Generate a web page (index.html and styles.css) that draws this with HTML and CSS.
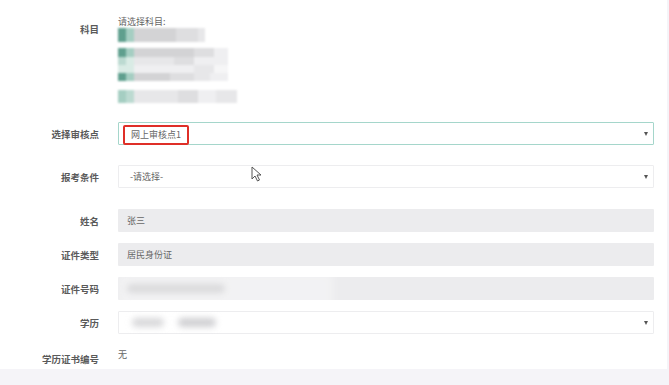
FILE: index.html
```html
<!DOCTYPE html>
<html lang="zh">
  <head>
    <meta charset="UTF-8" />
    <meta name="viewport" content="width=device-width, initial-scale=1.0" />
    <title>报名信息</title>
    <link rel="stylesheet" href="styles.css">
  </head>
  <body>
    <div class="panel">
      <div class="form">
        <!-- 科目 -->
        <div class="row row-top">
          <div class="label label-subject">科目</div>
          <div class="subject">
            <div class="hint">请选择科目:</div>
            <div class="mosaic">
              <div class="strip h14">
                <span class="g1 w8"></span><span class="g2 w8"></span><span class="c1 w42"></span><span class="c2 w22"></span><span class="c3 w7"></span>
              </div>
              <div class="strip h6"></div>
              <div class="strip h9">
                <span class="g1 w8"></span><span class="g2 w8"></span><span class="c1 w60"></span><span class="c2 w20"></span><span class="c4 w14"></span>
              </div>
              <div class="strip h8">
                <span class="g3 w8"></span><span class="g4 w8"></span><span class="c3 w40"></span><span class="c2 w20"></span><span class="c4 w34"></span>
              </div>
              <div class="strip h8">
                <span class="g4 w8"></span><span class="g4 w8"></span><span class="c4 w60"></span><span class="c3 w20"></span><span class="c5 w14"></span>
              </div>
              <div class="strip h8">
                <span class="g1 w8"></span><span class="g2 w8"></span><span class="c1 w36"></span><span class="c2 w24"></span><span class="c3 w16"></span><span class="c4 w18"></span>
              </div>
              <div class="strip h9"></div>
              <div class="strip h13">
                <span class="g2 w8"></span><span class="g3 w8"></span><span class="c3 w44"></span><span class="c2 w20"></span><span class="c4 w18"></span><span class="c3 w21"></span>
              </div>
            </div>
          </div>
        </div>

        <div class="row gap-lg">
          <div class="label">选择审核点</div>
          <div class="field select active">
            <span class="mark">网上审核点1</span>
            <i class="caret"></i>
          </div>
        </div>

        <div class="row gap-lg">
          <div class="label">报考条件</div>
          <div class="field select">
            <span class="placeholder">-请选择-</span>
            <i class="caret"></i>
            <svg class="cursor" width="11" height="16" viewBox="0 0 11 16">
              <path d="M1 1 L1 13 L4 10 L6.5 15 L8.5 14 L6 9 L10 9 Z" fill="#fff" stroke="#555" stroke-width="1" stroke-linejoin="round"/>
            </svg>
          </div>
        </div>

        <div class="row gap-xl">
          <div class="label">姓名</div>
          <div class="field readonly">张三</div>
        </div>

        <div class="row">
          <div class="label">证件类型</div>
          <div class="field readonly">居民身份证</div>
        </div>

        <div class="row">
          <div class="label">证件号码</div>
          <div class="field readonly">
            <span class="smudge s-long"></span>
            <span class="haze"></span>
          </div>
        </div>

        <div class="row">
          <div class="label">学历</div>
          <div class="field select">
            <span class="smudge s-short"></span>
            <span class="smudge s-mid"></span>
            <i class="caret"></i>
          </div>
        </div>

        <div class="row row-top last">
          <div class="label label-cert">学历证书编号</div>
          <div class="plain">无</div>
        </div>
      </div>
    </div>
  </body>
</html>
```

FILE: styles.css
```css
body {
  margin: 0;
  background-color: #f5f4f8;
  font-family: "Noto Sans CJK SC", "Noto Sans", sans-serif;
  color: #555;
  height: 385px;
  overflow: hidden;
}

.panel {
  width: 667px;
  height: 369px;
  background: #fff;
}

.form {
  padding-top: 16px;
}

.row {
  display: flex;
  align-items: center;
  margin-top: 11px;
}

.row:first-child {
  margin-top: 0;
}

.row-top {
  align-items: flex-start;
}

.gap-lg {
  margin-top: 20px;
}

.gap-xl {
  margin-top: 21px;
}

.row:nth-child(2) {
  margin-top: 19px;
}

.label {
  width: 99px;
  flex-shrink: 0;
  text-align: right;
  font-size: 9.5px;
  font-weight: bold;
  color: #5a5a5a;
  margin-right: 19px;
}

.label-subject {
  margin-top: 6px;
}

.label-cert {
  margin-top: 7px;
}

/* 科目列表（已打码） */
.subject {
  display: flex;
  flex-direction: column;
}

.hint {
  font-size: 9px;
  line-height: 12px;
  color: #666;
}

.mosaic {
  display: flex;
  flex-direction: column;
  filter: blur(0.8px);
}

.strip {
  display: flex;
}

.strip span {
  display: block;
}

.h6 { height: 6px; }
.h8 { height: 8px; }
.h9 { height: 9px; }
.h13 { height: 13px; }
.h14 { height: 14px; }

.w7 { width: 7px; }
.w8 { width: 8px; }
.w14 { width: 14px; }
.w16 { width: 16px; }
.w18 { width: 18px; }
.w20 { width: 20px; }
.w21 { width: 21px; }
.w22 { width: 22px; }
.w24 { width: 24px; }
.w34 { width: 34px; }
.w36 { width: 36px; }
.w40 { width: 40px; }
.w42 { width: 42px; }
.w44 { width: 44px; }
.w60 { width: 60px; }

.g1 { background: #5f9f8e; }
.g2 { background: #a5cec2; }
.g3 { background: #bcdad1; }
.g4 { background: #d9ebe5; }
.c1 { background: #d3d3d5; }
.c2 { background: #dedee0; }
.c3 { background: #e7e7e9; }
.c4 { background: #efeff1; }
.c5 { background: #f6f6f7; }

/* 输入框 */
.field {
  position: relative;
  box-sizing: border-box;
  width: 536px;
  height: 23px;
  display: flex;
  align-items: center;
  padding-left: 9px;
  font-size: 9px;
  color: #666;
  border-radius: 1px;
}

.select {
  background: #fff;
  border: 1px solid #ededef;
}

.select.active {
  border-color: #a5d6cb;
}

.readonly {
  background: #ececee;
}

.placeholder {
  padding-left: 2px;
}

.caret {
  position: absolute;
  right: 5px;
  top: 9px;
  width: 0;
  height: 0;
  border-left: 2.5px solid transparent;
  border-right: 2.5px solid transparent;
  border-top: 4px solid #555;
}

/* 红色标注框 */
.mark {
  margin-left: -5px;
  height: 20px;
  box-sizing: border-box;
  padding: 0 6px;
  display: flex;
  align-items: center;
  border: 2px solid #df2f28;
  border-radius: 2px;
  margin-top: 2px;
}

.cursor {
  position: absolute;
  left: 132px;
  top: 0px;
}

/* 打码区域 */
.smudge {
  display: block;
  height: 9px;
  border-radius: 5px;
  background: #c6c6c9;
  filter: blur(3px);
}

.haze {
  position: absolute;
  left: 0;
  top: -4px;
  width: 215px;
  height: 64px;
  background: rgba(255, 255, 255, 0.35);
  filter: blur(4px);
}

.s-long {
  width: 98px;
  margin-left: 0;
}

.s-short {
  width: 32px;
  margin-left: 4px;
  background: #d8d8da;
}

.s-mid {
  width: 38px;
  margin-left: 14px;
  background: #cfcfd2;
}

.plain {
  font-size: 9px;
  color: #666;
  margin-top: 3px;
}
```
